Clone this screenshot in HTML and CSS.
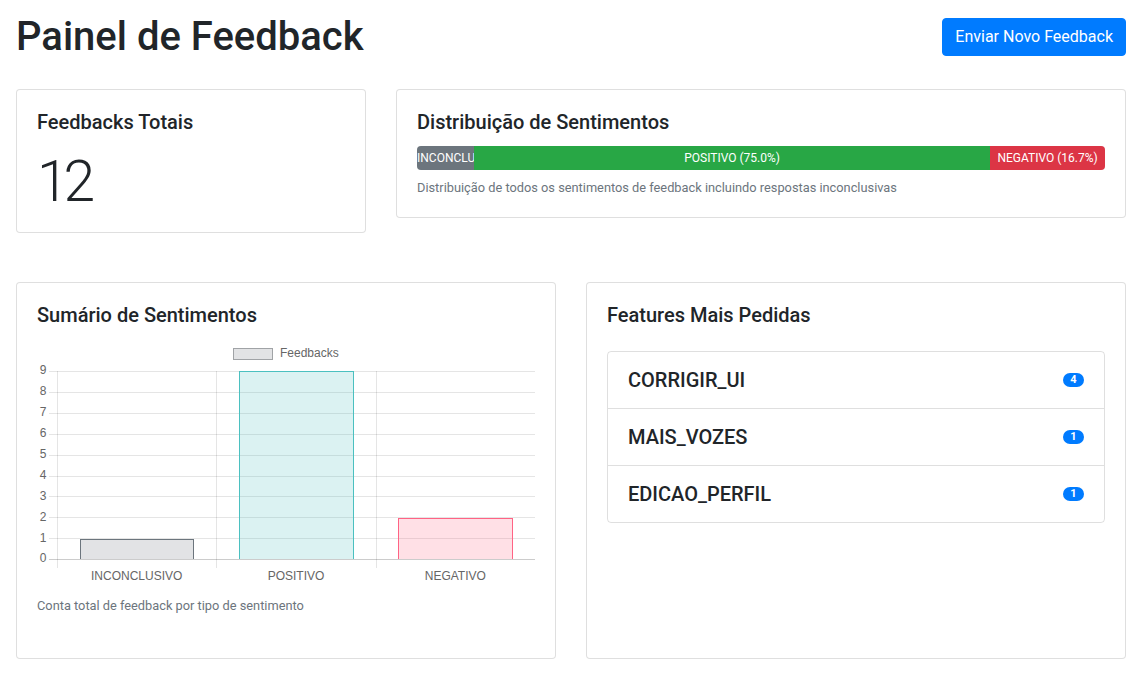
FILE: index.html
```html
<!DOCTYPE html>
<html lang="pt">
<head>
<meta charset="utf-8">
<title>Painel de Feedback</title>
<link rel="stylesheet" href="styles.css">
</head>
<body>
<div class="container">
  <header class="top">
    <h1 class="page-title">Painel de Feedback</h1>
    <button class="btn-primary" type="button">Enviar Novo Feedback</button>
  </header>

  <div class="row row-stats">
    <section class="card card-total">
      <h5 class="card-title">Feedbacks Totais</h5>
      <p class="big-number">12</p>
    </section>
    <section class="card card-dist">
      <h5 class="card-title">Distribuição de Sentimentos</h5>
      <div class="progress">
        <div class="bar bar-gray" style="width:8.3%">INCONCLUSIVO (8.3%)</div>
        <div class="bar bar-green" style="width:75%">POSITIVO (75.0%)</div>
        <div class="bar bar-red" style="width:16.7%">NEGATIVO (16.7%)</div>
      </div>
      <p class="muted">Distribuição de todos os sentimentos de feedback incluindo respostas inconclusivas</p>
    </section>
  </div>

  <div class="row row-main">
    <section class="card card-half">
      <h5 class="card-title">Sumário de Sentimentos</h5>
      <svg class="chart" width="499" height="249" viewBox="0 0 499 249" xmlns="http://www.w3.org/2000/svg">
        <g class="legend">
          <rect x="196.5" y="9.5" width="39" height="11" fill="#e2e3e5" stroke="#a0a3a6" stroke-width="1"/>
          <text x="243" y="15" class="lbl" dominant-baseline="middle">Feedbacks</text>
        </g>
        <g stroke="rgba(0,0,0,0.1)" stroke-width="1" shape-rendering="crispEdges">
          <line x1="12" y1="32.5" x2="498" y2="32.5"/>
          <line x1="12" y1="53.4" x2="498" y2="53.4"/>
          <line x1="12" y1="74.3" x2="498" y2="74.3"/>
          <line x1="12" y1="95.2" x2="498" y2="95.2"/>
          <line x1="12" y1="116.1" x2="498" y2="116.1"/>
          <line x1="12" y1="137" x2="498" y2="137"/>
          <line x1="12" y1="157.8" x2="498" y2="157.8"/>
          <line x1="12" y1="178.7" x2="498" y2="178.7"/>
          <line x1="12" y1="199.6" x2="498" y2="199.6"/>
          <line x1="20.5" y1="32" x2="20.5" y2="229"/>
          <line x1="179.5" y1="32" x2="179.5" y2="229"/>
          <line x1="339.5" y1="32" x2="339.5" y2="229"/>
        </g>
        <line x1="12" y1="220.5" x2="498" y2="220.5" stroke="rgba(0,0,0,0.2)" stroke-width="1" shape-rendering="crispEdges"/>
        <g shape-rendering="crispEdges">
          <rect x="42.5" y="200" width="114.5" height="20" fill="rgba(108,117,125,0.2)"/>
          <path d="M43 220 V200.5 H156.5 V220" fill="none" stroke="#6c757d" stroke-width="1"/>
          <rect x="202" y="32" width="114.5" height="188" fill="rgba(75,192,192,0.2)"/>
          <path d="M202.5 220 V32.5 H316.5 V220" fill="none" stroke="rgb(75,192,192)" stroke-width="1"/>
          <rect x="361" y="178.5" width="114.5" height="41.5" fill="rgba(255,99,132,0.2)"/>
          <path d="M361.5 220 V179 H475.5 V220" fill="none" stroke="rgb(255,99,132)" stroke-width="1"/>
        </g>
        <g class="lbl" text-anchor="end">
          <text x="9.5" y="32" dominant-baseline="middle">9</text>
          <text x="9.5" y="53" dominant-baseline="middle">8</text>
          <text x="9.5" y="74" dominant-baseline="middle">7</text>
          <text x="9.5" y="95" dominant-baseline="middle">6</text>
          <text x="9.5" y="116" dominant-baseline="middle">5</text>
          <text x="9.5" y="137" dominant-baseline="middle">4</text>
          <text x="9.5" y="157.5" dominant-baseline="middle">3</text>
          <text x="9.5" y="178.5" dominant-baseline="middle">2</text>
          <text x="9.5" y="199.5" dominant-baseline="middle">1</text>
          <text x="9.5" y="220" dominant-baseline="middle">0</text>
        </g>
        <g class="lbl" text-anchor="middle">
          <text x="99.7" y="238" dominant-baseline="middle">INCONCLUSIVO</text>
          <text x="259" y="238" dominant-baseline="middle">POSITIVO</text>
          <text x="418.3" y="238" dominant-baseline="middle">NEGATIVO</text>
        </g>
      </svg>
      <p class="muted caption">Conta total de feedback por tipo de sentimento</p>
    </section>

    <section class="card card-half">
      <h5 class="card-title">Features Mais Pedidas</h5>
      <ul class="list-group">
        <li class="list-item"><span class="feat">CORRIGIR_UI</span><span class="badge">4</span></li>
        <li class="list-item"><span class="feat">MAIS_VOZES</span><span class="badge">1</span></li>
        <li class="list-item"><span class="feat">EDICAO_PERFIL</span><span class="badge">1</span></li>
      </ul>
    </section>
  </div>
</div>
</body>
</html>
```

FILE: styles.css
```css
* { box-sizing: border-box; }

html, body {
  margin: 0;
  padding: 0;
  background: #fff;
}

body {
  font-family: Roboto, "Noto Sans", "Open Sans", sans-serif;
  font-size: 16px;
  line-height: 1.5;
  color: #212529;
}

.container {
  width: 1110px;
  margin: 0 auto;
}

.top {
  display: flex;
  justify-content: space-between;
  align-items: center;
  margin-top: 13px;
  height: 48px;
}

.page-title {
  margin: 0;
  font-size: 40px;
  font-weight: 500;
  line-height: 1.2;
}

.btn-primary {
  font-family: inherit;
  font-size: 16px;
  line-height: 1.5;
  color: #fff;
  background: #007bff;
  border: 1px solid #007bff;
  border-radius: 4px;
  padding: 6px 12px;
  cursor: pointer;
}

.row {
  display: flex;
  gap: 30px;
}

.row-stats {
  margin-top: 28px;
  align-items: flex-start;
}

.row-main {
  margin-top: 49px;
}

.card {
  border: 1px solid rgba(0, 0, 0, 0.125);
  border-radius: 4px;
  padding: 20px;
  background: #fff;
}

.card-total { width: 350px; height: 144px; }
.card-dist { width: 730px; height: 129px; }
.card-half { width: 540px; height: 377px; }

.card-title {
  margin: 0 0 12px;
  font-size: 20px;
  font-weight: 500;
  line-height: 1.2;
}

.big-number {
  margin: 0;
  padding-top: 6px;
  font-size: 57px;
  font-weight: 300;
  line-height: 60px;
  letter-spacing: -5px;
}

.progress {
  display: flex;
  height: 24px;
  border-radius: 4px;
  overflow: hidden;
  background: #e9ecef;
  font-size: 12px;
}

.bar {
  display: flex;
  flex-direction: column;
  justify-content: center;
  text-align: center;
  white-space: nowrap;
  color: #fff;
  overflow: visible;
}

.bar-gray { background: #6c757d; }
.bar-green { background: #28a745; position: relative; }
.bar-red { background: #dc3545; }

.muted {
  margin: 8px 0 0;
  font-size: 12.8px;
  color: #6c757d;
}

.chart {
  display: block;
}

.lbl, .lbl text {
  font-family: "Liberation Sans", Arial, sans-serif;
  font-size: 12px;
  fill: #666;
}

.caption {
  margin-top: 8px;
}

.list-group {
  list-style: none;
  margin: 24px 0 0;
  padding: 0;
  border: 1px solid rgba(0, 0, 0, 0.125);
  border-radius: 4px;
}

.list-item {
  display: flex;
  justify-content: space-between;
  align-items: center;
  height: 57px;
  padding: 0 20px;
  border-top: 1px solid rgba(0, 0, 0, 0.125);
}

.list-item:first-child {
  border-top: none;
  height: 56px;
}

.feat {
  font-size: 20px;
  font-weight: 500;
  line-height: 1.2;
}

.badge {
  display: inline-block;
  min-width: 21px;
  height: 14px;
  padding: 0 6px;
  border-radius: 10px;
  background: #007bff;
  color: #fff;
  font-size: 11px;
  font-weight: 700;
  line-height: 14px;
  text-align: center;
}
```
